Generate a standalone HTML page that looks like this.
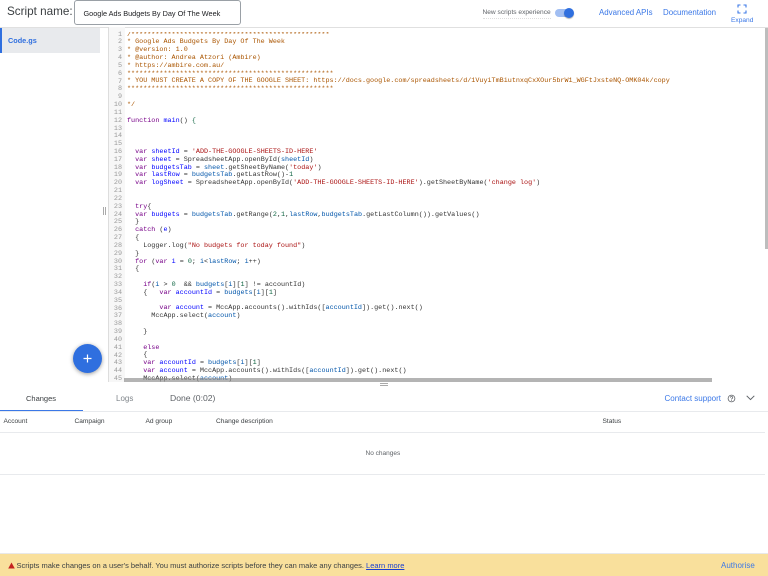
<!DOCTYPE html>
<html><head><meta charset="utf-8"><style>
html,body{margin:0;padding:0;width:768px;height:576px;overflow:hidden;background:#fff;font-family:"Liberation Sans",sans-serif;color:#3c4043}
#w{position:absolute;left:0;top:0;width:768px;height:576px;overflow:hidden;filter:blur(.3px)}
.a{position:absolute;white-space:nowrap}
.blue{color:#1a73e8}
#g{position:absolute;left:108px;top:27px;width:17px;height:355px;background:#f7f7f7;border-left:1px solid #ddd;box-sizing:border-box}
.n{position:absolute;width:13px;text-align:right;left:0;color:#999;font:6.75px/8px "Liberation Mono",monospace}
pre{position:absolute;left:127px;top:31.5px;margin:0;font:6.75px/7.83px "Liberation Mono",monospace;color:#333;width:580px;height:350px;overflow:hidden}
.c{color:#a50}.k{color:#708}.d{color:#00f}.v{color:#05a}.s{color:#a11}.m{color:#164}
.th{font-size:6.6px;top:418px;color:#3c4043}
</style></head><body><div id="w">
<div class="a" style="left:7px;top:2.5px;font-size:11.7px;line-height:18px;color:#3c4043">Script name:</div>
<div class="a" style="left:74px;top:0;width:167px;height:25px;border:1px solid #9aa0a6;border-radius:3px;box-sizing:border-box;background:#fff"></div>
<div class="a" style="left:83.5px;top:8.500px;font-size:7.3px;line-height:9px;color:#202124">Google Ads Budgets By Day Of The Week</div>
<div class="a" style="left:482.5px;top:8px;font-size:6.6px;line-height:9px;color:#5f6368;border-bottom:1px dotted #ddd;padding-bottom:1px">New scripts experience</div>
<div class="a" style="left:555px;top:9px;width:17px;height:8px;border-radius:4px;background:#a1bef2"></div>
<div class="a" style="left:564px;top:8px;width:10px;height:10px;border-radius:50%;background:#2f6fdf;box-shadow:0 1px 1px rgba(0,0,0,.3)"></div>
<div class="a blue" style="left:599px;top:8px;font-size:7.9px;line-height:10px;color:#3b78e7">Advanced APIs</div>
<div class="a blue" style="left:663px;top:8px;font-size:7.9px;line-height:10px;color:#3b78e7">Documentation</div>
<svg class="a" style="left:737px;top:4px" width="10" height="10" viewBox="0 0 10 10" fill="none" stroke="#3b78e7" stroke-width="1.1"><path d="M1 3.5V1H3.5M6.500 1H9V3.500M9 6.500V9H6.500M3.500 9H1V6.500"/></svg>
<div class="a" style="left:731px;top:16.500px;font-size:6.600px;line-height:8px;color:#3b78e7">Expand</div>
<div class="a" style="left:0;top:27px;width:768px;height:1px;background:#e0e0e0"></div>

<div class="a" style="left:0;top:28px;width:100px;height:25px;background:#e8eaed"></div>
<div class="a" style="left:0;top:28px;width:1.500px;height:25px;background:#2f6fdf"></div>
<div class="a" style="left:8px;top:36px;font-size:7.3px;line-height:9px;font-weight:bold;color:#2f6fdf">Code.gs</div>
<div class="a" style="left:103px;top:207px;width:1px;height:8px;background:#aaa;box-shadow:2px 0 0 #aaa"></div>

<div id="g">
<div class="n" style="top:3.500px">1</div><div class="n" style="top:11.3px">2</div><div class="n" style="top:19.2px">3</div><div class="n" style="top:27px">4</div><div class="n" style="top:34.800px">5</div><div class="n" style="top:42.700px">6</div><div class="n" style="top:50.500px">7</div><div class="n" style="top:58.300px">8</div><div class="n" style="top:66.100px">9</div><div class="n" style="top:74px">10</div><div class="n" style="top:81.800px">11</div><div class="n" style="top:89.600px">12</div><div class="n" style="top:97.500px">13</div><div class="n" style="top:105.300px">14</div><div class="n" style="top:113.100px">15</div><div class="n" style="top:121px">16</div><div class="n" style="top:128.800px">17</div><div class="n" style="top:136.600px">18</div><div class="n" style="top:144.400px">19</div><div class="n" style="top:152.300px">20</div><div class="n" style="top:160.100px">21</div><div class="n" style="top:167.900px">22</div><div class="n" style="top:175.800px">23</div><div class="n" style="top:183.600px">24</div><div class="n" style="top:191.400px">25</div><div class="n" style="top:199.300px">26</div><div class="n" style="top:207.100px">27</div><div class="n" style="top:214.900px">28</div><div class="n" style="top:222.700px">29</div><div class="n" style="top:230.600px">30</div><div class="n" style="top:238.400px">31</div><div class="n" style="top:246.200px">32</div><div class="n" style="top:254.100px">33</div><div class="n" style="top:261.900px">34</div><div class="n" style="top:269.700px">35</div><div class="n" style="top:277.600px">36</div><div class="n" style="top:285.400px">37</div><div class="n" style="top:293.200px">38</div><div class="n" style="top:301px">39</div><div class="n" style="top:308.900px">40</div><div class="n" style="top:316.700px">41</div><div class="n" style="top:324.500px">42</div><div class="n" style="top:332.400px">43</div><div class="n" style="top:340.200px">44</div><div class="n" style="top:348px">45</div>
</div>

<pre><span class="c">/*************************************************
* Google Ads Budgets By Day Of The Week
* @version: 1.0
* @author: Andrea Atzori (Ambire)
* https://ambire.com.au/
***************************************************
* YOU MUST CREATE A COPY OF THE GOOGLE SHEET: https://docs.google.com/spreadsheets/d/1VuyiTmBiutnxqCxXOur5brW1_WGFtJxsteNQ-OMK04k/copy
***************************************************

*/</span>

<span class="k">function</span> <span class="d">main</span>() <span class="m">{</span>



  <span class="k">var</span> <span class="d">sheetId</span> = <span class="s">'ADD-THE-GOOGLE-SHEETS-ID-HERE'</span>
  <span class="k">var</span> <span class="d">sheet</span> = SpreadsheetApp.openById(<span class="v">sheetId</span>)
  <span class="k">var</span> <span class="d">budgetsTab</span> = <span class="v">sheet</span>.getSheetByName(<span class="s">'today'</span>)
  <span class="k">var</span> <span class="d">lastRow</span> = <span class="v">budgetsTab</span>.getLastRow()-<span class="m">1</span>
  <span class="k">var</span> <span class="d">logSheet</span> = SpreadsheetApp.openById(<span class="s">'ADD-THE-GOOGLE-SHEETS-ID-HERE'</span>).getSheetByName(<span class="s">'change log'</span>)


  <span class="k">try</span>{
  <span class="k">var</span> <span class="d">budgets</span> = <span class="v">budgetsTab</span>.getRange(<span class="m">2</span>,<span class="m">1</span>,<span class="v">lastRow</span>,<span class="v">budgetsTab</span>.getLastColumn()).getValues()
  }
  <span class="k">catch</span> (<span class="d">e</span>)
  {
    Logger.log(<span class="s">"No budgets for today found"</span>)
  }
  <span class="k">for</span> (<span class="k">var</span> <span class="d">i</span> = <span class="m">0</span>; <span class="v">i</span>&lt;<span class="v">lastRow</span>; <span class="v">i</span>++)
  {

    <span class="k">if</span>(<span class="v">i</span> &gt; <span class="m">0</span>  &amp;&amp; <span class="v">budgets</span>[<span class="v">i</span>][<span class="m">1</span>] != accountId)
    {   <span class="k">var</span> <span class="d">accountId</span> = <span class="v">budgets</span>[<span class="v">i</span>][<span class="m">1</span>]

        <span class="k">var</span> <span class="d">account</span> = MccApp.accounts().withIds([<span class="v">accountId</span>]).get().next()
      MccApp.select(<span class="v">account</span>)

    }

    <span class="k">else</span>
    {
    <span class="k">var</span> <span class="d">accountId</span> = <span class="v">budgets</span>[<span class="v">i</span>][<span class="m">1</span>]
    <span class="k">var</span> <span class="d">account</span> = MccApp.accounts().withIds([<span class="v">accountId</span>]).get().next()
    MccApp.select(<span class="v">account</span>)</pre>

<div class="a" style="left:124px;top:378px;width:588px;height:4px;background:rgba(140,140,140,.65)"></div>
<div class="a" style="left:765px;top:28px;width:3px;height:221px;background:#bdbdbd"></div>
<div class="a" style="left:380px;top:383px;width:8px;height:1px;background:#aaa;box-shadow:0 2px 0 #aaa"></div>

<div class="a" style="left:73px;top:344px;width:29px;height:29px;border-radius:50%;background:#2f6fdf;box-shadow:0 1px 4px rgba(0,0,0,.4)"></div>
<svg class="a" style="left:82px;top:353px" width="11" height="11" viewBox="0 0 11 11" fill="none" stroke="#fff" stroke-width="1.200"><path d="M5.500 1.500V9.500M1.500 5.500H9.500"/></svg>

<div class="a" style="left:26px;top:393.500px;font-size:7.500px;line-height:10px;color:#3c4043">Changes</div>
<div class="a" style="left:116px;top:393.500px;font-size:8px;line-height:10px;color:#80868b">Logs</div>
<div class="a" style="left:170px;top:393px;font-size:8.600px;line-height:10px;color:#5f6368">Done (0:02)</div>
<div class="a" style="left:664.500px;top:393.500px;font-size:8px;line-height:10px;color:#3b78e7">Contact support</div>
<svg class="a" style="left:727px;top:394px" width="9" height="9" viewBox="0 0 9 9" fill="none" stroke="#5f6368" stroke-width=".8"><circle cx="4.500" cy="4.500" r="3.400"/><path d="M3.300 3.600C3.400 2.100 5.700 2.200 5.700 3.600C5.700 4.500 4.500 4.500 4.500 5.500M4.500 6V6.800"/></svg>
<svg class="a" style="left:746px;top:395px" width="9" height="6" viewBox="0 0 9 6" fill="none" stroke="#5f6368" stroke-width="1"><path d="M.7 .8L4.500 4.600L8.300 .8"/></svg>
<div class="a" style="left:0;top:410.500px;width:768px;height:1.500px;background:#e8eaed"></div>
<div class="a" style="left:0;top:409.500px;width:83px;height:1.500px;background:#3b78e7"></div>
<div class="a th" style="left:3.500px">Account</div>
<div class="a th" style="left:74.500px">Campaign</div>
<div class="a th" style="left:145.500px">Ad group</div>
<div class="a th" style="left:216px">Change description</div>
<div class="a th" style="left:602.500px">Status</div>
<div class="a" style="left:0;top:432px;width:765px;height:1px;background:#e8eaed"></div>
<div class="a" style="left:365.500px;top:450px;font-size:6.500px;color:#5f6368">No changes</div>
<div class="a" style="left:0;top:474px;width:765px;height:1px;background:#e8eaed"></div>

<div class="a" style="left:0;top:553px;width:768px;height:23px;background:#f9e09c;border-top:1px solid #e8e8e8;box-sizing:border-box"></div>
<svg class="a" style="left:8px;top:562px" width="7" height="7" viewBox="0 0 7 7"><path d="M3.500 .5L6.800 6.500H.2Z" fill="#c5221f"/></svg>
<div class="a" style="left:16.500px;top:560.500px;font-size:7.500px;line-height:10px;color:#3c4043">Scripts make changes on a user's behalf. You must authorize scripts before they can make any changes. <span style="color:#1a3fd0;text-decoration:underline">Learn more</span></div>
<div class="a" style="left:721px;top:561px;font-size:8px;line-height:10px;color:#3b78e7">Authorise</div>
</div></body></html>
